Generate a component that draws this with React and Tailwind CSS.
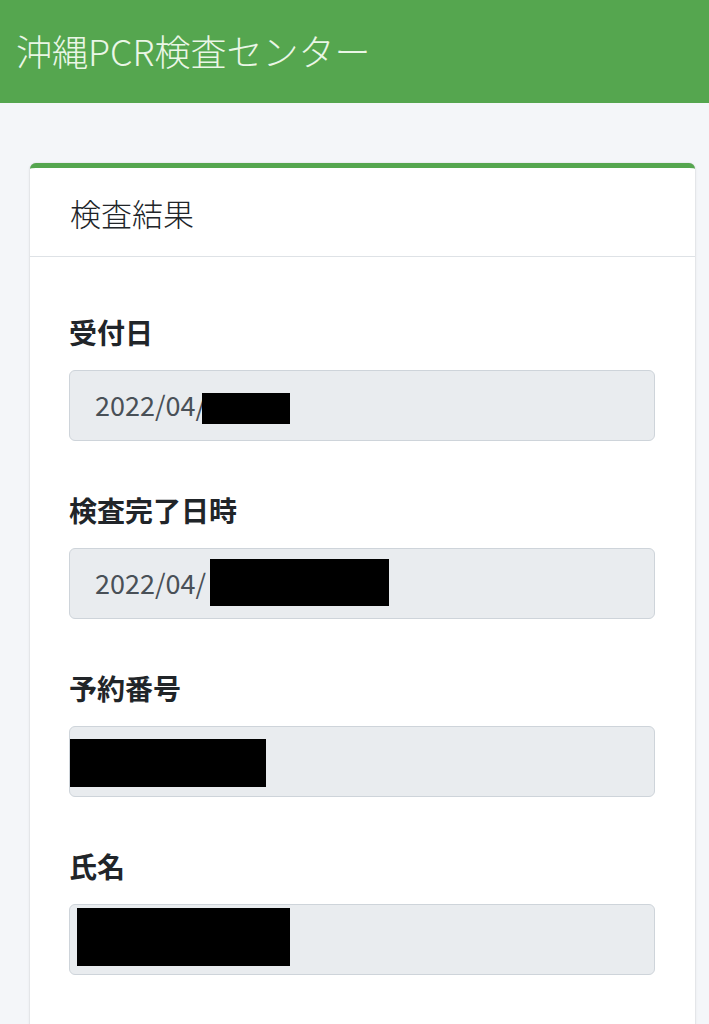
export default function App() {
    const fields = [
        { label: '受付日', text: '2022/04/', box: 'left-[132px] top-[22px] w-[88px] h-[31px]' },
        { label: '検査完了日時', text: '2022/04/', box: 'left-[140px] top-[10px] w-[179px] h-[47px]' },
        { label: '予約番号', text: '', box: 'left-0 top-[12px] w-[196px] h-[48px]' },
        { label: '氏名', text: '', box: 'left-[7px] top-[3px] w-[213px] h-[58px]' },
    ];

    return (
        <div className="min-h-screen bg-[#f4f6f9] font-['Noto_Sans_CJK_JP','Noto_Sans',sans-serif] overflow-hidden">
            <header className="h-[103px] bg-[#55a64f] px-4 flex items-center">
                <h1 className="text-[36px] font-light text-[#eaf6e6] leading-none pb-1">沖縄PCR検査センター</h1>
            </header>

            <main className="pt-[60px] pl-[30px] pr-[14px]">
                <div className="bg-white rounded-md border-t-[5px] border-[#55a64f] shadow-[0_0_1px_rgba(0,0,0,0.2),0_1px_3px_rgba(0,0,0,0.12)] pb-10">
                    <div className="h-[89px] px-10 flex items-center border-b border-[#dee2e6]">
                        <h2 className="text-[31px] font-light text-[#212529] leading-none">検査結果</h2>
                    </div>
                    <div className="pt-[57px] pl-[39px] pr-10">
                        {fields.map((f) => (
                            <div key={f.label} className="mb-[51px]">
                                <label className="block text-[28px] font-bold text-[#212529] leading-[36px] mb-5">{f.label}</label>
                                <div className="relative h-[71px] bg-[#e9ecef] border border-[#ced4da] rounded-md px-[25px] flex items-center">
                                    <span className="text-[27px] text-[#495057]">{f.text}</span>
                                    {f.box && <span className={`absolute bg-black ${f.box}`} />}
                                </div>
                            </div>
                        ))}
                    </div>
                </div>
            </main>
        </div>
    );
}
